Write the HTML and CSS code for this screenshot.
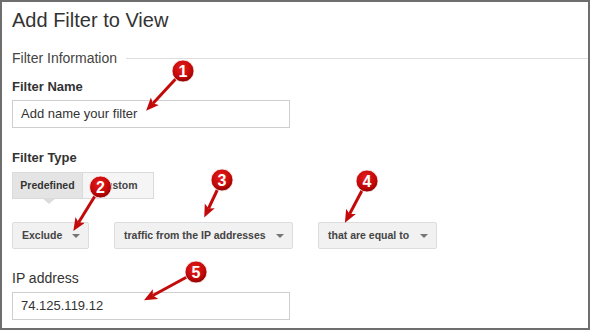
FILE: index.html
```html
<!DOCTYPE html>
<html>
<head>
<meta charset="utf-8">
<link rel="stylesheet" href="styles.css">
</head>
<body>
<div class="frame">
  <h1 class="title">Add Filter to View</h1>
  <div class="section-head"><span>Filter Information</span><span class="rule"></span></div>
  <div class="label">Filter Name</div>
  <div class="input">Add name your filter</div>
  <div class="label type-label">Filter Type</div>
  <div class="seg">
    <div class="seg-btn active">Predefined<span class="caret"></span></div>
    <div class="seg-btn">Custom</div>
  </div>
  <div class="selects">
    <div class="select w-exclude"><span>Exclude</span><span class="arrow"></span></div>
    <div class="select w-traffic"><span>traffic from the IP addresses</span><span class="arrow"></span></div>
    <div class="select w-equal"><span>that are equal to</span><span class="arrow"></span></div>
  </div>
  <div class="ip-label">IP address</div>
  <div class="input ip-input">74.125.119.12</div>

  <svg class="notes" width="592" height="330" viewBox="0 0 592 330">
    <defs>
      <marker id="ah" markerUnits="userSpaceOnUse" markerWidth="14" markerHeight="12" refX="3" refY="5.5" orient="auto">
        <path d="M0,0 L13,5.5 L0,11 L3,5.5 z" fill="#c30a0a"/>
      </marker>
      <radialGradient id="rg" cx="0.45" cy="0.35" r="0.65">
        <stop offset="0" stop-color="#e81c1c"/>
        <stop offset="0.7" stop-color="#c00808"/>
        <stop offset="1" stop-color="#8c0000"/>
      </radialGradient>
    </defs>
    <g stroke="#c30a0a" stroke-width="3" marker-end="url(#ah)">
      <line x1="183" y1="71" x2="152.9" y2="103.5"/>
      <line x1="100.5" y1="187" x2="78.6" y2="222.5"/>
      <line x1="222" y1="180" x2="208.5" y2="208.5"/>
      <line x1="367" y1="181" x2="349.6" y2="214"/>
      <line x1="196" y1="272" x2="152.8" y2="295.5"/>
    </g>
    <g class="badges">
      <circle cx="183" cy="71" r="11" fill="url(#rg)" stroke="#fff" stroke-width="0.8"/>
      <circle cx="100.5" cy="187" r="11" fill="url(#rg)" stroke="#fff" stroke-width="0.8"/>
      <circle cx="222" cy="180" r="11" fill="url(#rg)" stroke="#fff" stroke-width="0.8"/>
      <circle cx="367" cy="181" r="11" fill="url(#rg)" stroke="#fff" stroke-width="0.8"/>
      <circle cx="196" cy="272" r="11" fill="url(#rg)" stroke="#fff" stroke-width="0.8"/>
      <text x="183" y="76.5">1</text>
      <text x="100.5" y="192.5">2</text>
      <text x="222" y="185.5">3</text>
      <text x="367" y="186.5">4</text>
      <text x="196" y="277.5">5</text>
    </g>
  </svg>
</div>
</body>
</html>
```

FILE: styles.css
```css
html, body {
  margin: 0;
  padding: 0;
  background: #fff;
}
.frame {
  position: relative;
  box-sizing: border-box;
  width: 590px;
  height: 330px;
  border: 2px solid #6e6e6e;
  padding: 0 0 0 10px;
  font-family: "Liberation Sans", Arial, sans-serif;
  color: #333;
  overflow: hidden;
}
.title {
  margin: 6px 0 0 0;
  font-size: 20px;
  line-height: 24px;
  font-weight: normal;
  color: #333;
}
.section-head {
  display: flex;
  align-items: center;
  margin-top: 17px;
  height: 18px;
  font-size: 14px;
  line-height: 18px;
  color: #444;
}
.section-head .rule {
  flex: 1;
  height: 0;
  border-top: 1px solid #dedede;
  margin-left: 9px;
}
.label {
  margin-top: 12px;
  font-size: 13px;
  line-height: 16px;
  font-weight: bold;
  color: #333;
}
.input {
  box-sizing: border-box;
  margin-top: 5px;
  width: 278px;
  height: 28px;
  border: 1px solid #cfcfcf;
  padding-left: 8px;
  font-size: 13px;
  line-height: 26px;
  color: #333;
}
.type-label {
  margin-top: 22px;
}
.seg {
  display: flex;
  margin-top: 6px;
  height: 27px;
}
.seg-btn {
  position: relative;
  box-sizing: border-box;
  width: 71px;
  height: 27px;
  border: 1px solid #dadada;
  background: #f5f5f5;
  font-size: 10.5px;
  font-weight: bold;
  line-height: 25px;
  text-align: center;
  color: #444;
}
.seg-btn + .seg-btn {
  border-left: none;
}
.seg-btn.active {
  background: #e4e4e4;
  color: #333;
}
.caret {
  position: absolute;
  left: 29px;
  top: 25px;
  width: 0;
  height: 0;
  border-left: 7px solid transparent;
  border-right: 7px solid transparent;
  border-top: 6px solid #dcdcdc;
}
.selects {
  display: flex;
  gap: 25px;
  margin-top: 23px;
}
.select {
  box-sizing: border-box;
  display: flex;
  align-items: center;
  justify-content: space-between;
  height: 27px;
  padding: 0 8px 2px 9px;
  background: #f1f1f1;
  border: 1px solid #dcdcdc;
  border-radius: 2px;
  font-size: 10.5px;
  font-weight: bold;
  color: #444;
}
.w-exclude { width: 77px; }
.w-traffic { width: 179px; }
.w-equal { width: 119px; }
.arrow {
  width: 0;
  height: 0;
  margin-top: 3px;
  border-left: 4px solid transparent;
  border-right: 4px solid transparent;
  border-top: 4px solid #757575;
}
.ip-label {
  margin-top: 20px;
  font-size: 14px;
  line-height: 18px;
  color: #333;
}
.ip-input {
  margin-top: 5px;
}
.notes {
  position: absolute;
  left: -2px;
  top: -2px;
  pointer-events: none;
}
.badges text {
  fill: #fff;
  font-family: "Liberation Sans", Arial, sans-serif;
  font-weight: bold;
  font-size: 16px;
  text-anchor: middle;
}
```
